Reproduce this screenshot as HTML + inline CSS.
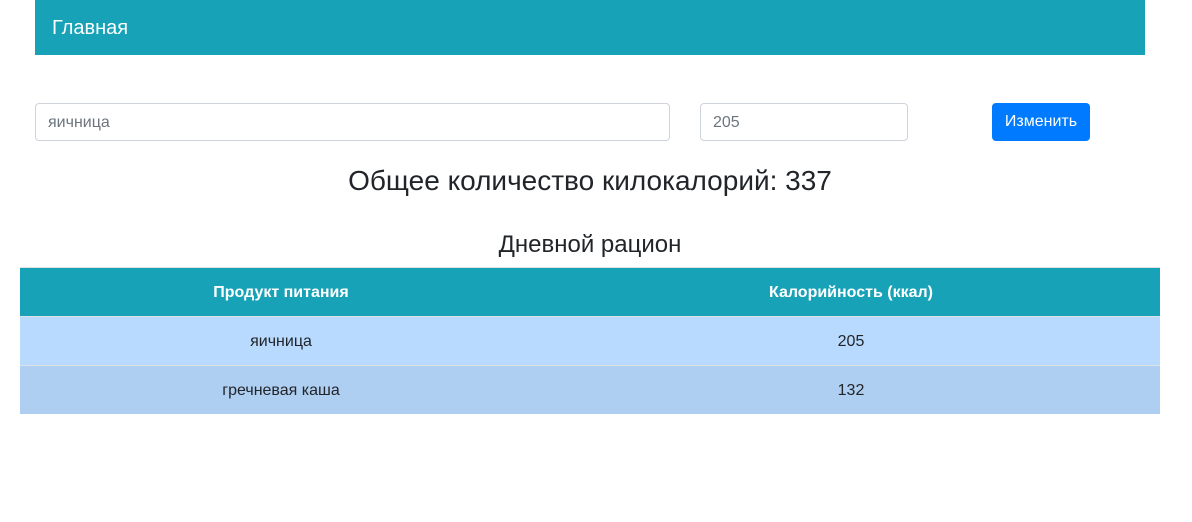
<!DOCTYPE html>
<html><head><meta charset="utf-8"><style>
body{margin:0;width:1192px;height:522px;background:#fff;font-family:"Liberation Sans",sans-serif;color:#212529;position:relative}
.nav{position:absolute;left:35px;top:0;width:1110px;height:55px;background:#17a2b8;color:#fff;font-size:20px;line-height:56px}
.nav span{margin-left:17px}
.in{position:absolute;top:103px;height:38px;box-sizing:border-box;border:1px solid #ced4da;border-radius:4px;color:#6c757d;font-size:16px;line-height:38px;padding-left:12px}
.btn{position:absolute;left:992px;top:103px;width:98px;height:38px;background:#007bff;color:#fff;border-radius:4px;font-size:16px;line-height:38px;text-align:center}
.t{position:absolute;left:20px;width:1140px;text-align:center}
table{position:absolute;left:20px;top:267px;width:1140px;border-collapse:collapse;font-size:16px;text-align:center}
th{background:#17a2b8;color:#fff;height:46px;border-top:1px solid #dee2e6;padding:2px 0 0}
td{height:47px;border-top:1px solid #dee2e6;padding:1px 0 0}
</style></head><body>
<div class="nav"><span>Главная</span></div>
<div class="in" style="left:35px;width:635px">яичница</div>
<div class="in" style="left:700px;width:208px">205</div>
<div class="btn">Изменить</div>
<div class="t" style="top:165px;font-size:28px">Общее количество килокалорий: 337</div>
<div class="t" style="top:231px;font-size:24px">Дневной рацион</div>
<table>
<tr><th style="width:522px">Продукт питания</th><th>Калорийность (ккал)</th></tr>
<tr style="background:#b8daff"><td>яичница</td><td>205</td></tr>
<tr style="background:#afcff2"><td>гречневая каша</td><td>132</td></tr>
</table>
</body></html>
